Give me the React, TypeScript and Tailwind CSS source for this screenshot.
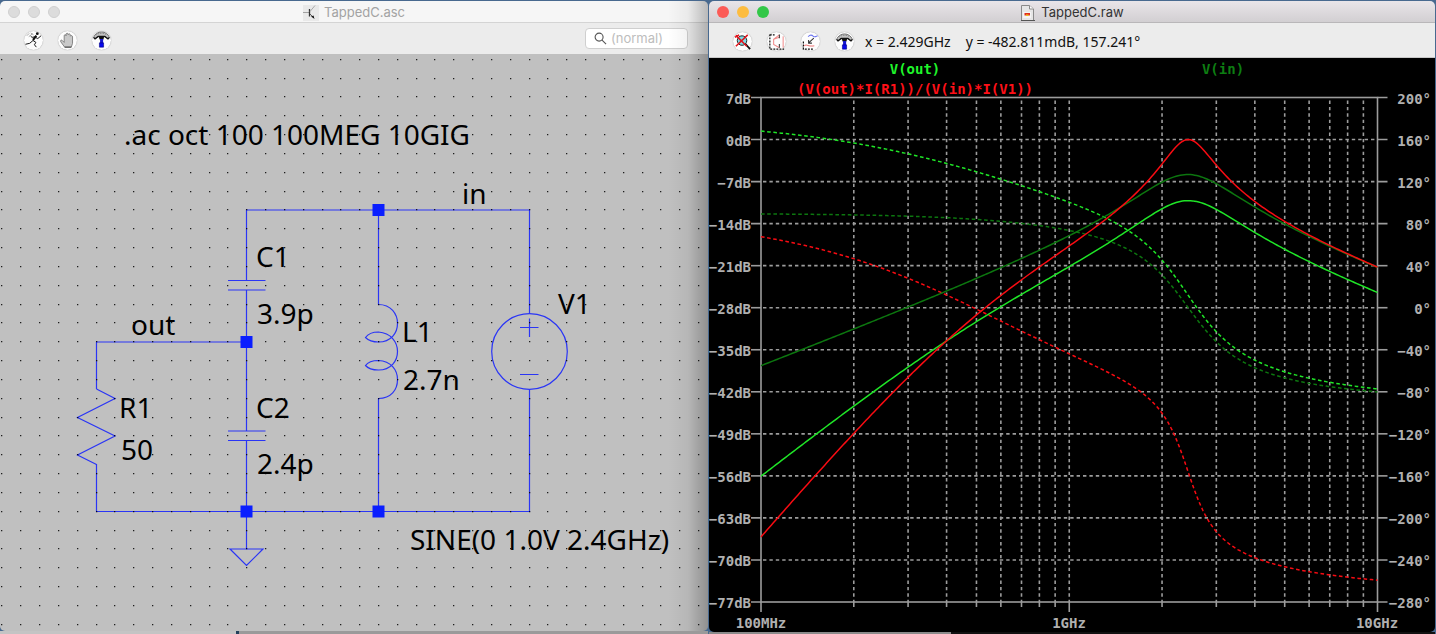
import React from "react";

/* ---------- circuit model ---------- */
type C = [number, number];
const mul = (a: C, b: C): C => [a[0] * b[0] - a[1] * b[1], a[0] * b[1] + a[1] * b[0]];
const div = (a: C, b: C): C => {
  const d = b[0] * b[0] + b[1] * b[1];
  return [(a[0] * b[0] + a[1] * b[1]) / d, (a[1] * b[0] - a[0] * b[1]) / d];
};
const add = (a: C, b: C): C => [a[0] + b[0], a[1] + b[1]];
const db = (a: C) => 20 * Math.log10(Math.hypot(a[0], a[1]));
const deg = (a: C) => (Math.atan2(a[1], a[0]) * 180) / Math.PI;

const R1 = 50;
const C1 = 3.9e-12;
const C2 = 2.4e-12;
const L1 = 2.7e-9;
const RS = 130;

function solve(f: number) {
  const w = 2 * Math.PI * f;
  const z2 = div([1, 0], [1 / R1, w * C2]);
  const branch = add(z2, [0, -1 / (w * C1)]);
  const yin = add(div([1, 0], branch), [0, -1 / (w * L1)]);
  const zin = div([1, 0], yin);
  const vin = div(zin, add(zin, [RS, 0]));
  const vout = mul(vin, div(z2, branch));
  const iv: C = [(vin[0] - 1) / RS, vin[1] / RS];
  const sq = mul(vout, vout);
  const gain = div([sq[0] / R1, sq[1] / R1], mul(vin, iv));
  return { vin, vout, gain };
}

/* ---------- plot geometry ---------- */
const X0 = 52;
const X1 = 668.5;
const Y0 = 39.5;
const Y1 = 544;
const xOf = (f: number) => X0 + ((X1 - X0) * Math.log10(f / 1e8)) / 2;
const yDb = (v: number) => Y0 + ((Y1 - Y0) * (7 - v)) / 84;
const yPh = (v: number) => Y0 + ((Y1 - Y0) * (200 - v)) / 480;

function buildCurves() {
  const names = ["vin", "vout", "gain"] as const;
  const mag: Record<string, string> = {};
  const phase: Record<string, string> = {};
  for (const n of names) {
    let prev: number | null = null;
    const m: string[] = [];
    const p: string[] = [];
    for (let i = 0; i <= 300; i++) {
      const f = 1e8 * Math.pow(10, i / 150);
      const v = solve(f)[n];
      let a = deg(v);
      if (prev !== null) {
        while (a - prev > 180) a -= 360;
        while (a - prev < -180) a += 360;
      }
      prev = a;
      m.push(`${xOf(f).toFixed(2)},${yDb(db(v)).toFixed(2)}`);
      p.push(`${xOf(f).toFixed(2)},${yPh(a).toFixed(2)}`);
    }
    mag[n] = m.join(" ");
    phase[n] = p.join(" ");
  }
  return { mag, phase };
}
const curves = buildCurves();
const traces = [
  { key: "vin", color: "#0c760f" },
  { key: "vout", color: "#1fe527" },
  { key: "gain", color: "#f80b12" },
];

const rows = Array.from({ length: 13 }, (_, i) => i);
const freqs = Array.from({ length: 19 }, (_, i) => (i < 9 ? (i + 1) * 1e8 : (i - 8) * 1e9));
const minus = (n: number) => (n < 0 ? `−${-n}` : `${n}`);

function Plot() {
  return (
    <svg viewBox="0 0 726 574" className="block w-full bg-black" role="img" aria-label="Frequency response">
      <g stroke="#9c9c9c" strokeWidth="1.6" fill="none">
        {freqs.map((f) => {
          const x = xOf(f);
          const major = f === 1e8 || f === 1e9 || f === 1e10;
          return (
            <g key={f}>
              {f !== 1e8 && f !== 1e10 && <line x1={x} x2={x} y1={Y0 + 3} y2={Y1} strokeDasharray="3.4 3" />}
              <line x1={x} x2={x} y1={Y1} y2={Y1 + (major ? 10 : 5)} />
            </g>
          );
        })}
        {rows.map((i) => {
          const y = yDb(7 - 7 * i);
          return (
            <g key={i}>
              {i > 0 && i < 12 && <line x1={X0 + 2} x2={X1} y1={y} y2={y} strokeDasharray="3.4 3" />}
              <line x1={X0 - 10} x2={X0} y1={y} y2={y} />
              <line x1={X1} x2={X1 + 10} y1={y} y2={y} />
            </g>
          );
        })}
        <rect x={X0} y={Y0} width={X1 - X0} height={Y1 - Y0} />
      </g>
      <g fill="none" strokeWidth="1.5">
        {traces.map((t) => (
          <polyline key={t.key} points={curves.phase[t.key]} stroke={t.color} strokeDasharray="3.6 2.6" />
        ))}
        {traces.map((t) => (
          <polyline key={t.key} points={curves.mag[t.key]} stroke={t.color} />
        ))}
      </g>
      <g className="font-['DejaVu_Sans_Mono',monospace] text-[14px] font-bold" fill="#b0b0b0">
        {rows.map((i) => (
          <g key={i}>
            <text x={42} y={yDb(7 - 7 * i) + 6} textAnchor="end">{`${minus(7 - 7 * i)}dB`}</text>
            <text x={722} y={yDb(7 - 7 * i) + 6} textAnchor="end">{`${minus(200 - 40 * i)}°`}</text>
          </g>
        ))}
        <text x={52} y={570} textAnchor="middle">100MHz</text>
        <text x={360} y={570} textAnchor="middle">1GHz</text>
        <text x={668} y={570} textAnchor="middle">10GHz</text>
        <text x={206} y={16} textAnchor="middle" fill="#1ff52a">V(out)</text>
        <text x={514} y={16} textAnchor="middle" fill="#0d7d12">V(in)</text>
        <text x={206} y={36} textAnchor="middle" fill="#ff1018">(V(out)*I(R1))/(V(in)*I(V1))</text>
      </g>
    </svg>
  );
}

/* ---------- schematic ---------- */
const labels: [number, number, string][] = [
  [124, 91, ".ac oct 100 100MEG 10GIG"],
  [462, 150, "in"],
  [256, 213, "C1"],
  [257, 270, "3.9p"],
  [131, 281, "out"],
  [402, 288, "L1"],
  [403, 336, "2.7n"],
  [558, 260, "V1"],
  [119, 364, "R1"],
  [121, 406, "50"],
  [256, 364, "C2"],
  [257, 420, "2.4p"],
  [410, 496, "SINE(0 1.0V 2.4GHz)"],
];
const nodes: [number, number][] = [
  [378.5, 156],
  [246.5, 288],
  [246.5, 457.5],
  [378.5, 457.5],
];
const PITCH = 18.83;
const gridPath = Array.from({ length: 31 }, (_, r) =>
  Array.from({ length: 38 }, (_, c) => `M${Math.round(1.4 + c * PITCH)} ${Math.round(4.8 + r * PITCH)}h1.3v1.3h-1.3z`).join(""),
).join("");

function Schematic() {
  return (
    <svg viewBox="0 0 708 577" className="block w-full bg-[#c0c0c0]" role="img" aria-label="Schematic">
      <g className="font-['Noto_Sans',sans-serif] text-[28px]" fill="#000">
        {labels.map(([x, y, t]) => (
          <text key={t} x={x} y={y}>{t}</text>
        ))}
      </g>
      <g stroke="#2a35f5" strokeWidth="1.2" fill="none">
        <path d="M246.5 226.5V156H529.5V259.5M246.5 236V377M246.5 386.5V495M96.5 335V288H246.5M96.5 410V457.5H529.5V335.5" />
        <path d="M228 226.5H265.5M228 236H265.5M228 377H265.5M228 386.5H265.5" />
        <path d="M96.5 335L115 344.5L77.5 363.5L115 382L77.5 401L96.5 410.5" />
        <path d="M230 495H263L246.5 511.5Z" />
        <path d="M378.5 156V250.500C391 250.500 397.500 260 397.500 269.500C397.500 279 391 288 378.500 288C373 288 368 286 365.500 283.500C368 280 373 278 378.500 278C391 279 397.500 288 397.500 297.500C397.500 307 391 316 378.500 316C373 316 368 314.500 365.500 311.500C368 308 373 306.500 378.500 306.500C391 307 397.500 316 397.500 325.500C397.500 336 391 344.500 378.500 344.500V457.500" />
        <circle cx="529.5" cy="297.5" r="37.8" />
        <path d="M520 273.500H538.500M529.500 264.500V283M520 320.500H538.500" />
      </g>
      <path d={gridPath} fill="#000" fillOpacity=".85" />
      <g fill="#0a1eff">
        {nodes.map(([x, y]) => (
          <rect key={`${x}-${y}`} x={x - 6} y={y - 6} width="12" height="12" />
        ))}
      </g>
    </svg>
  );
}

/* ---------- icons ---------- */
const Hammer = () => (
  <svg viewBox="0 0 20 20" className="size-5">
    <path d="M1.500 7.500C3 3.500 6.500 1.500 10 1.500S17 3.500 18.500 7.500L17 9L13.500 6.500H6.500L3 9Z" fill="#c4c4c4" stroke="#555" strokeWidth=".8" />
    <path d="M4 5C6.500 2.300 13.500 2.300 16 5" fill="none" stroke="#777" strokeWidth=".8" strokeDasharray="1.500 1" />
    <path d="M1.800 7.200L3.200 8.800L6.500 6.200H13.500L16.800 8.800L18.200 7.200" fill="none" stroke="#111" strokeWidth="1.300" />
    <path d="M7 6H13L12 9.500H8Z" fill="#111" />
    <path d="M8.500 9H11.700V14H8.500Z" fill="#1717cf" />
    <path d="M7.800 13H12.200V17.500H7.800Z" fill="#0808ee" stroke="#00007a" strokeWidth=".6" />
  </svg>
);
const Runner = () => (
  <svg viewBox="0 0 20 20" className="size-5" fill="none" stroke="#111">
    <circle cx="14" cy="3.300" r="1.500" fill="#111" stroke="none" />
    <path d="M13 5.500L9.500 10" strokeWidth="2.200" />
    <path d="M12.500 6.500L8.500 7.200L7 6M12.500 7.500L14.500 8.500L18 5.500M9.500 10.500L6 13.500L1.500 14.500M9.500 10.500L12.500 12.500L11 15L13 17.500" strokeWidth="1" />
    <path d="M3 5.500L5.500 3M5 6.500L9 3.500M7 2.500L10 4.500" stroke="#888" strokeWidth=".8" />
  </svg>
);
const Hand = () => (
  <svg viewBox="0 0 20 20" className="size-5">
    <path d="M7 17.500L3 12C2 10.500 3.500 9.500 4.500 10.500L6.500 12.500V5.500C6.500 4 8.500 4 8.500 5.500V4C8.500 2.500 10.700 2.500 10.700 4V4.500C11 3 13 3.200 13 5V6C13.500 4.800 15.300 5.200 15.300 6.800V13.500L14 17.500Z" fill="#c9c9c9" stroke="#777" strokeWidth=".9" />
    <path d="M7 17.500H14" stroke="#444" />
  </svg>
);
const ZoomCross = () => (
  <svg viewBox="0 0 20 20" className="size-5" fill="none">
    <circle cx="9.500" cy="8.500" r="5" fill="#7fdce6" stroke="#222" />
    <path d="M13 12L18 17.500" stroke="#111" strokeWidth="1.800" />
    <path d="M3 3L14.500 14.500M15.500 2.500L3 14.500M2 5L6.500 2.500" stroke="#e2141c" strokeWidth="1.600" />
  </svg>
);
const FitAxes = () => (
  <svg viewBox="0 0 20 20" className="size-5" fill="none">
    <path d="M3 2V17.500H18M3 2.500H8" stroke="#111" strokeWidth="1.300" strokeDasharray="2 1.200" />
    <path d="M13 2.500L7 7V12.500L13 16M7 7L13 5" stroke="#f08a8a" strokeWidth="1.100" />
    <path d="M13 2V6M13 12V16" stroke="#333" strokeWidth="1.100" />
    <path d="M17 4V16" stroke="#e66" strokeWidth=".8" />
  </svg>
);
const PanPlot = () => (
  <svg viewBox="0 0 20 20" className="size-5" fill="none">
    <path d="M2.500 9.500V17.500H13" stroke="#111" strokeWidth="1.300" strokeDasharray="2 1.200" />
    <path d="M7.500 4.500C9.500 2 11.500 2.500 13 4C14.500 5.500 16 4 17.500 3.500" stroke="#6f78f0" strokeWidth="1.100" />
    <path d="M13.500 6L8 11M8 8V11.200H11.500" stroke="#333" strokeWidth="1.100" />
    <path d="M3.500 14C6 11.500 8 15.500 14 14" stroke="#ee7777" strokeWidth="1.100" />
  </svg>
);
const ScheIcon = () => (
  <svg viewBox="0 0 16 16" className="size-4 bg-[#e9e9e9]" fill="none" stroke="#333">
    <path d="M0 7.500H6.500" stroke="#999" strokeWidth=".9" />
    <path d="M6.500 4V11.500" strokeWidth="1.300" />
    <path d="M7 6.500L12 .5" stroke="#999" strokeWidth=".8" />
    <path d="M7 9L11 13" strokeWidth=".8" />
    <path d="M8 11.500L11.500 14L10.500 10.500Z" fill="#111" stroke="none" />
  </svg>
);
const RawIcon = () => (
  <svg viewBox="0 0 16 16" className="size-4" fill="none">
    <path d="M1.500 .5H9.500L13.500 4V15.500H1.500Z" fill="#e6e6e6" stroke="#8a8a8a" />
    <path d="M9.500 .5V4H13.500" fill="#fff" stroke="#8a8a8a" />
    <path d="M3 7H11V13H3Z" fill="#f4f4f4" />
    <path d="M4.500 8H10V10.500H4.500Z" fill="#e0301e" />
    <path d="M6 9.500H8.500V11H6Z" fill="#f3c01c" />
    <path d="M1 15.500H15" stroke="#555" />
  </svg>
);

function Tool({ label, children }: { label: string; children: React.ReactNode }) {
  return (
    <button type="button" aria-label={label} className="flex size-[19px] items-center justify-center rounded-full bg-[#fdfdfd] shadow-[0_0_1px_#888]">
      {children}
    </button>
  );
}

function Lights({ colors }: { colors: string[] }) {
  return (
    <div className="flex gap-2">
      {colors.map((c, i) => (
        <button key={i} type="button" aria-label={["Close", "Minimize", "Zoom"][i]} className={`size-3 rounded-full ${c}`} />
      ))}
    </div>
  );
}

const idle = "bg-[#dcdcdc] border border-[#cfcfcf]";

export default function App() {
  return (
    <main className="grid grid-cols-[709fr_727fr] bg-[#48698f] pt-px font-['Inter',sans-serif] text-[13px]">
      <section className="pr-px">
        <div className="relative overflow-hidden rounded-[5px]">
          <header className="grid h-[22px] grid-cols-[1fr_auto_1fr] items-center border-b border-[#d4d4d4] bg-[#f6f6f6] px-2">
            <Lights colors={[idle, idle, idle]} />
            <h1 className="flex items-center gap-[5px] pt-0.5 text-[#a3a3a3]">
              <ScheIcon />
              TappedC.asc
            </h1>
          </header>
          <div className="flex h-[31px] items-center bg-[#ececec] pr-5 pl-6">
            <div className="flex gap-[15px] pt-[3px]">
              <Tool label="Run"><Runner /></Tool>
              <Tool label="Halt"><Hand /></Tool>
              <Tool label="Settings"><Hammer /></Tool>
            </div>
            <label className="ml-auto flex h-[21px] w-[103px] items-center gap-1 rounded-[4px] border border-[#cfcfcf] bg-white pl-2">
              <svg viewBox="0 0 14 14" className="size-[13px] shrink-0" fill="none" stroke="#555" strokeWidth="1.200">
                <circle cx="5.500" cy="5.500" r="4.300" />
                <path d="M8.700 8.700L13 13" />
              </svg>
              <input aria-label="Search" placeholder="(normal)" className="w-full min-w-0 bg-transparent outline-none placeholder:text-[#bdbdbd]" />
            </label>
          </div>
          <Schematic />
          <div className="pointer-events-none absolute inset-y-0 right-0 w-10 bg-linear-to-r from-transparent via-black/5 to-black/25" />
        </div>
        <div className="flex h-[3px]">
          <div className="w-1/3 bg-[#c4c4c4]" />
          <div className="w-[3px] bg-[#24405c]" />
          <div className="flex-1 bg-[#9a9a9a]" />
        </div>
      </section>
      <section className="pr-px">
        <div className="overflow-hidden rounded-[5px]">
          <header className="grid h-[22px] grid-cols-[1fr_auto_1fr] items-center border-b border-[#b9b7b9] bg-linear-to-b from-[#e9e5e9] to-[#d2cfd2] px-2">
            <Lights colors={["bg-[#fc5b57]", "bg-[#fdbc40]", "bg-[#33c748]"]} />
            <h1 className="flex items-center gap-[5px] pt-0.5 text-[#333]">
              <RawIcon />
              TappedC.raw
            </h1>
          </header>
          <div className="flex h-[35px] items-center border-b border-[#c8c8c8] bg-[#ececec] pl-6">
            <div className="flex gap-[15px] pt-[3px]">
              <Tool label="Zoom to fit"><ZoomCross /></Tool>
              <Tool label="Autorange"><FitAxes /></Tool>
              <Tool label="Pan"><PanPlot /></Tool>
              <Tool label="Settings"><Hammer /></Tool>
            </div>
            <p className="ml-[11px] flex gap-[15px] pt-0.5 font-['Noto_Sans',sans-serif] text-[14px] text-[#111]">
              <span>x = 2.429GHz</span>
              <span>y = -482.811mdB, 157.241°</span>
            </p>
          </div>
          <Plot />
        </div>
        <div className="flex h-0.5">
          <div className="w-1/3 bg-[#8a8a8a]" />
          <div className="flex-1 bg-[#111]" />
        </div>
      </section>
    </main>
  );
}
